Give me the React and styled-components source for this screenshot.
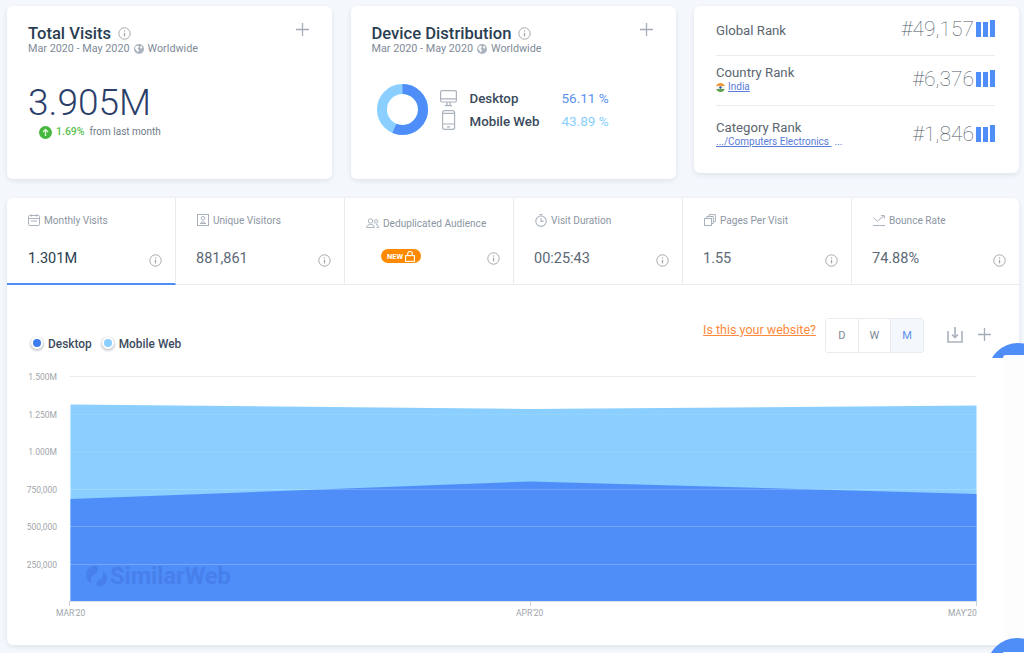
import React from 'react';
import styled, { createGlobalStyle } from 'styled-components';

const GlobalStyle = createGlobalStyle`
  html, body { margin: 0; padding: 0; height: 100%; background: #f4f8fd; overflow: hidden; }
  body { font-family: Roboto, "Liberation Sans", sans-serif; }
`;

const Page = styled.div`
  position: relative;
  width: 1024px;
  height: 653px;
  padding: 6px 5px 0 7px;
  box-sizing: border-box;
  overflow: hidden;
`;

const TopRow = styled.div`
  display: flex;
  align-items: flex-start;
  gap: 18.5px;
`;

const Card = styled.section`
  position: relative;
  box-sizing: border-box;
  width: 325px;
  height: ${p => p.$h || 173}px;
  background: #fff;
  border-radius: 6px;
  box-shadow: 0 2px 5px rgba(42, 62, 82, 0.1);
`;

const MetricCard = styled(Card)`
  padding: 18px 21px;
`;

const TitleRow = styled.div`
  display: flex;
  align-items: center;
  gap: 7px;
  height: 19px;
`;

const Title = styled.h2`
  margin: 0;
  font-size: 16.6px;
  line-height: 19px;
  font-weight: 500;
  color: #2a3e52;
`;

const SubTitle = styled.div`
  display: flex;
  align-items: center;
  gap: 4px;
  margin-top: -1px;
  font-size: 10.8px;
  line-height: 13px;
  color: #808b98;
`;

const AddButton = styled.button`
  position: absolute;
  top: 17px;
  right: 23px;
  padding: 0;
  border: 0;
  background: none;
  display: flex;
`;

const BigValue = styled.div`
  margin-top: 26px;
  font-size: 37px;
  line-height: 44px;
  font-weight: 300;
  color: #2a3e6a;
`;

const Change = styled.div`
  display: flex;
  align-items: center;
  margin: 0 0 0 11px;
  font-size: 10px;
  line-height: 14px;
  color: #6f7b88;
`;

const ChangeValue = styled.span`
  margin: 0 5px 0 4px;
  font-size: 10.5px;
  font-weight: 500;
  color: #5cc04e;
`;

const DeviceBody = styled.div`
  display: flex;
  align-items: center;
  margin: 29px 0 0 5px;
`;

const DeviceIcons = styled.div`
  display: flex;
  flex-direction: column;
  gap: 3px;
  margin-left: 12px;
`;

const DeviceNames = styled.div`
  display: flex;
  flex-direction: column;
  gap: 6px;
  margin-left: 13px;
  width: 92px;
`;

const DeviceName = styled.div`
  font-size: 13.3px;
  line-height: 17px;
  font-weight: 500;
  color: #3a4a5c;
`;

const DeviceShares = styled.div`
  display: flex;
  flex-direction: column;
  gap: 6px;
`;

const DeviceShare = styled.div`
  font-size: 13.5px;
  line-height: 17px;
  color: ${p => p.$c};
`;

const RankCard = styled(Card)`
  padding: 0 24px 0 22px;
`;

const RankRow = styled.div`
  display: flex;
  justify-content: space-between;
  box-sizing: border-box;
  height: ${p => p.$h}px;
  padding-top: ${p => p.$top}px;
  border-bottom: ${p => (p.$last ? 0 : '1px solid #e9ecef')};
`;

const RankLabel = styled.div`
  font-size: 13.2px;
  line-height: 16px;
  color: #5c6670;
`;

const RankLink = styled.a`
  display: flex;
  align-items: center;
  gap: 3px;
  font-size: 10px;
  line-height: 12px;
  color: #5a7bd8;
  span { text-decoration: underline; }
`;

const RankValue = styled.div`
  display: flex;
  align-items: flex-end;
  gap: 2px;
  height: 20px;
  margin-top: ${p => p.$mt || 0}px;
  font-size: 21px;
  line-height: 20px;
  font-weight: 100;
  color: #4d5866;
`;

const Bars = styled.div`
  display: flex;
  align-items: flex-end;
  gap: 2px;
  margin-bottom: 2px;
`;

const Bar = styled.i`
  display: block;
  width: 5px;
  height: ${p => p.$h}px;
  background: #4f8df9;
`;

const MainCard = styled.section`
  margin-top: 19px;
  width: 1012px;
  height: 447px;
  background: #fff;
  border-radius: 6px;
  box-shadow: 0 2px 5px rgba(42, 62, 82, 0.1);
`;

const Tabs = styled.div`
  display: grid;
  grid-template-columns: repeat(5, 169px) 1fr;
  height: 87px;
  border-bottom: 1px solid #e9ecef;
  box-sizing: border-box;
`;

const Tab = styled.div`
  position: relative;
  padding: ${p => (p.$low ? 18 : 15)}px 0 0 21px;
  height: 87px;
  box-sizing: border-box;
  border-right: ${p => (p.$last ? 0 : '1px solid #e9ecef')};
  border-bottom: ${p => (p.$active ? '2px solid #4f8df9' : 0)};
`;

const TabTitle = styled.div`
  display: flex;
  align-items: center;
  gap: 4px;
  height: 14px;
  font-size: 10.1px;
  color: #8c96a2;
`;

const TabValue = styled.div`
  margin: 22px 0 0 ${p => (p.$active ? 0 : -1)}px;
  font-size: 14.5px;
  line-height: 20px;
  color: ${p => (p.$active ? '#2a3e52' : '#5d6876')};
`;

const TabInfo = styled.span`
  position: absolute;
  right: 13px;
  top: ${p => (p.$low ? 54 : 56)}px;
  display: flex;
`;

const NewBadge = styled.div`
  display: inline-flex;
  align-items: center;
  justify-content: center;
  gap: 2px;
  margin: 19px 0 0 15px;
  width: 40px;
  height: 14px;
  border-radius: 7px;
  background: #ff8a00;
  color: #fff;
  font-size: 7.5px;
  font-weight: 700;
`;

const ChartHead = styled.div`
  display: flex;
  justify-content: space-between;
  align-items: flex-start;
  height: 83px;
  padding: 33px 28px 0 24px;
  box-sizing: border-box;
`;

const Legend = styled.div`
  display: flex;
  gap: 10px;
  padding-top: 18px;
`;

const LegendItem = styled.div`
  display: flex;
  align-items: center;
  gap: 5px;
  font-size: 11.9px;
  line-height: 16px;
  font-weight: 500;
  color: #3d4c5e;
`;

const Dot = styled.span`
  width: 8px;
  height: 8px;
  margin-top: -3px;
  border-radius: 50%;
  background: ${p => p.$c};
  border: 2px solid #fff;
  box-shadow: 0 1px 2px 1px rgba(42, 62, 82, 0.25);
`;

const Controls = styled.div`
  display: flex;
  align-items: flex-start;
`;

const SiteLink = styled.a`
  margin: 4px 9px 0 0;
  font-size: 12.5px;
  line-height: 16px;
  color: #ff8a3c;
  text-decoration: underline;
`;

const Range = styled.div`
  display: flex;
  height: 33px;
  border: 1px solid #e9ecef;
  border-radius: 3px;
  margin-right: 23px;
`;

const RangeItem = styled.div`
  display: flex;
  align-items: center;
  justify-content: center;
  width: 31.7px;
  font-size: 11px;
  color: ${p => (p.$active ? '#5b8ff0' : '#7b8794')};
  background: ${p => (p.$active ? '#f4f8fd' : '#fff')};
  & + & { border-left: 1px solid #e9ecef; }
`;

const ChartActions = styled.div`
  display: flex;
  align-items: center;
  gap: 15px;
  height: 33px;
`;

const ChartWrap = styled.div`
  svg { display: block; }
`;

// the two cut-off round buttons that stick out on the right edge
const FloatClip = styled.div`
  position: absolute;
  left: 985px;
  top: ${p => p.$y}px;
  width: 39px;
  height: 15px;
  overflow: hidden;
`;

const FloatRound = styled.div`
  width: 60px;
  height: 60px;
  margin-left: ${p => p.$x || 3}px;
  border-radius: 50%;
  background: #4f8df9;
`;

const FloatSheet = styled.div`
  position: absolute;
  left: 1003px;
  top: ${p => p.$y}px;
  width: 21px;
  height: ${p => p.$h}px;
  background: #fdfdfe;
  border-radius: 3px 0 0 0;
`;

const Plus = () => (
  <svg width="13" height="13" viewBox="0 0 13 13" fill="none" stroke="#a4adb7" strokeWidth="1.3">
    <path d="M6.5 0v13M0 6.5h13" />
  </svg>
);

const Info = () => (
  <svg width="13" height="13" viewBox="0 0 13 13" fill="none" stroke="#a9a9a9">
    <circle cx="6.5" cy="6.5" r="5.7" />
    <path d="M6.5 5.8v3.6" strokeWidth="1.3" />
    <path d="M6.5 3.4v1.2" strokeWidth="1.3" />
  </svg>
);

const Globe = () => (
  <svg width="10" height="10" viewBox="0 0 10 10">
    <circle cx="5" cy="5" r="5" fill="#a9b3bd" />
    <path d="M1.5 2.5 4 1.5l1 1.5-1.5 1.5L5 6 4 8.5 2.5 6.5 1 4.5zM7 1.5l1.5 2L7 5 6 3z" fill="#fff" />
  </svg>
);

const UpArrow = () => (
  <svg width="13" height="13" viewBox="0 0 13 13">
    <circle cx="6.5" cy="6.5" r="6.5" fill="#44b83c" />
    <path d="M6.5 10V3.6M4 6l2.5-2.5L9 6" fill="none" stroke="#dff5d8" strokeWidth="1.3" />
  </svg>
);

const Donut = () => (
  <svg width="51" height="51" viewBox="0 0 51 51">
    <circle cx="25.5" cy="25.5" r="20.5" fill="none" stroke="#8acfff" strokeWidth="10" />
    <circle
      cx="25.5"
      cy="25.5"
      r="20.5"
      fill="none"
      stroke="#4f8df9"
      strokeWidth="10"
      strokeDasharray={`${2 * Math.PI * 20.5 * 0.5611} 200`}
      transform="rotate(-90 25.5 25.5)"
    />
  </svg>
);

const DesktopIcon = () => (
  <svg width="17" height="17" viewBox="0 0 17 17" fill="none" stroke="#aab2bd" strokeWidth="1.2">
    <rect x=".6" y=".6" width="15.8" height="11.4" rx="1.5" />
    <path d="M.6 8.8h15.8M7 12v3M10 12v3M5 15.6h7" />
  </svg>
);

const MobileIcon = () => (
  <svg width="17" height="20" viewBox="0 0 17 20" fill="none" stroke="#aab2bd" strokeWidth="1.2">
    <rect x="2.6" y=".6" width="12" height="18.8" rx="2" />
    <path d="M2.6 3.4h12M2.6 14h12M7 16.8h3" />
  </svg>
);

const IndiaFlag = () => (
  <svg width="9" height="9" viewBox="0 0 9 9">
    <defs>
      <clipPath id="flagClip"><circle cx="4.5" cy="4.5" r="4.5" /></clipPath>
    </defs>
    <g clipPath="url(#flagClip)">
      <rect width="9" height="3" fill="#f39a3b" />
      <rect y="3" width="9" height="3" fill="#f4f4f4" />
      <rect y="6" width="9" height="3" fill="#5fa04e" />
      <circle cx="4.5" cy="4.5" r="1.2" fill="#34569a" />
    </g>
  </svg>
);

const RankBars = () => (
  <Bars>
    <Bar $h={15} />
    <Bar $h={15} />
    <Bar $h={17} />
  </Bars>
);

const CalendarIcon = () => (
  <svg width="12" height="12" viewBox="0 0 12 12" fill="none" stroke="#aab2bd">
    <rect x=".5" y="1.5" width="11" height="10" rx="1" />
    <path d="M.5 4.5h11M3 .2v2.5M9 .2v2.5M3 7h6" />
  </svg>
);

const VisitorIcon = () => (
  <svg width="12" height="12" viewBox="0 0 12 12" fill="none" stroke="#aab2bd">
    <rect x=".5" y=".5" width="11" height="11" />
    <circle cx="6" cy="4.3" r="1.8" />
    <path d="M3 9.5h6M3.5 9.5c0-2 5-2 5 0" />
  </svg>
);

const AudienceIcon = () => (
  <svg width="13" height="10" viewBox="0 0 13 10" fill="none" stroke="#aab2bd">
    <circle cx="4.5" cy="3" r="2.2" />
    <circle cx="10" cy="3.4" r="1.7" />
    <path d="M.5 9.5c0-4 8-4 8 0zM10 6.5c1.5 0 2.5 1 2.5 3h-2" />
  </svg>
);

const TimerIcon = () => (
  <svg width="12" height="13" viewBox="0 0 12 13" fill="none" stroke="#aab2bd" strokeWidth="1.1">
    <circle cx="6" cy="7.2" r="5.2" />
    <path d="M6 4v3.4h2.6M4.5.6h3" />
  </svg>
);

const PagesIcon = () => (
  <svg width="12" height="12" viewBox="0 0 12 12" fill="none" stroke="#aab2bd">
    <rect x=".5" y="4.5" width="7" height="7" />
    <path d="M2.8 4.5v-2h6.5v7H7.5M5 2.5V.6h6.4v7H9.3" />
  </svg>
);

const BounceIcon = () => (
  <svg width="12" height="11" viewBox="0 0 12 11" fill="none" stroke="#aab2bd">
    <path d="M.3 2.5 4.2 6.2 11 .8M8 .5h3.3v3M0 10.5h12" />
  </svg>
);

const LockIcon = () => (
  <svg width="10" height="11" viewBox="0 0 10 11" fill="none" stroke="#fff" strokeWidth="1.1">
    <rect x=".6" y="4.6" width="8.8" height="5.8" />
    <path d="M2.7 4.6V2.8a2.3 2.3 0 0 1 4.6 0v1.8" />
  </svg>
);

const DownloadIcon = () => (
  <svg width="16" height="16" viewBox="0 0 16 16" fill="none" stroke="#aab2bd" strokeWidth="1.6">
    <path d="M1 4v11h14V4M8 0v10M5 7.5 8 10.5l3-3" />
  </svg>
);

const yTicks = [
  ['1.500M', 376, '#e9ecef'],
  ['1.250M', 414, 'rgba(255,255,255,0.1)'],
  ['1.000M', 451, 'rgba(255,255,255,0.1)'],
  ['750,000', 489, 'rgba(255,255,255,0.2)'],
  ['500,000', 526, 'rgba(255,255,255,0.22)'],
  ['250,000', 564, 'rgba(255,255,255,0.22)'],
];

const Chart = () => (
  <svg width="1012" height="277" viewBox="7 368 1012 277" fontFamily="Roboto, sans-serif">
    <path d="M70.5 404.5 530 409 976.5 405.5V601H70.5z" fill="#8acfff" />
    <path d="M70.5 499 530 481.5 976.5 494V601H70.5z" fill="#4f8df9" />
    {yTicks.map(([label, y, color]) => (
      <g key={label}>
        <line x1="70" x2="976" y1={y + 0.5} y2={y + 0.5} stroke={color} />
        <text x="57" y={y + 3.5} fontSize="8.5" textAnchor="end" fill="#a0a5ab">{label}</text>
      </g>
    ))}
    <line x1="70" x2="976" y1="601.5" y2="601.5" stroke="#dfe4ea" />
    <path d="M69.5 601v5M530.5 601v5M976.5 601v5" stroke="#ccd1d6" />
    <text x="56" y="616" fontSize="8.5" fill="#a0a5ab">MAR'20</text>
    <text x="516" y="616" fontSize="8.5" fill="#a0a5ab">APR'20</text>
    <text x="948" y="616" fontSize="8.5" fill="#a0a5ab">MAY'20</text>
    <g fill="#3f72d8" opacity="0.45">
      <path d="M97 566c-6-1-11 3-11 9 0 4 3 7 6 8-2-4-1-7 3-9 3-2 4-5 2-8zM98 586c6 1 9-3 9-8 0-4-2-6-5-7 2 4 1 7-3 9-3 2-3 4-1 6z" />
      <text x="110" y="584" fontSize="23.5" fontWeight="700">SimilarWeb</text>
    </g>
  </svg>
);

const tabs = [
  { title: 'Monthly Visits', value: '1.301M', Icon: CalendarIcon, active: true },
  { title: 'Unique Visitors', value: '881,861', Icon: VisitorIcon },
  { title: 'Deduplicated Audience', Icon: AudienceIcon, low: true },
  { title: 'Visit Duration', value: '00:25:43', Icon: TimerIcon },
  { title: 'Pages Per Visit', value: '1.55', Icon: PagesIcon },
  { title: 'Bounce Rate', value: '74.88%', Icon: BounceIcon },
];

export default function App() {
  return (
    <Page>
      <GlobalStyle />
      <TopRow>
        <MetricCard>
          <TitleRow><Title>Total Visits</Title><Info /></TitleRow>
          <SubTitle>Mar 2020 - May 2020 <Globe /> Worldwide</SubTitle>
          <AddButton><Plus /></AddButton>
          <BigValue>3.905M</BigValue>
          <Change><UpArrow /><ChangeValue>1.69%</ChangeValue> from last month</Change>
        </MetricCard>
        <MetricCard>
          <TitleRow><Title>Device Distribution</Title><Info /></TitleRow>
          <SubTitle>Mar 2020 - May 2020 <Globe /> Worldwide</SubTitle>
          <AddButton><Plus /></AddButton>
          <DeviceBody>
            <Donut />
            <DeviceIcons><DesktopIcon /><MobileIcon /></DeviceIcons>
            <DeviceNames>
              <DeviceName>Desktop</DeviceName>
              <DeviceName>Mobile Web</DeviceName>
            </DeviceNames>
            <DeviceShares>
              <DeviceShare $c="#5b8ff0">56.11 %</DeviceShare>
              <DeviceShare $c="#8acfff">43.89 %</DeviceShare>
            </DeviceShares>
          </DeviceBody>
        </MetricCard>
        <RankCard $h={167}>
          <RankRow $h={50} $top={17}>
            <RankLabel>Global Rank</RankLabel>
            <RankValue $mt={-4}><span>#49,157</span><RankBars /></RankValue>
          </RankRow>
          <RankRow $h={50} $top={9}>
            <div>
              <RankLabel>Country Rank</RankLabel>
              <RankLink><IndiaFlag /><span>India</span></RankLink>
            </div>
            <RankValue $mt={4}><span>#6,376</span><RankBars /></RankValue>
          </RankRow>
          <RankRow $h={60} $top={14} $last>
            <div>
              <RankLabel>Category Rank</RankLabel>
              <RankLink><span>.../Computers Electronics&nbsp;</span> ...</RankLink>
            </div>
            <RankValue $mt={4}><span>#1,846</span><RankBars /></RankValue>
          </RankRow>
        </RankCard>
      </TopRow>
      <MainCard>
        <Tabs>
          {tabs.map(({ title, value, Icon, active, low }, i) => (
            <Tab key={title} $active={active} $low={low} $last={i === tabs.length - 1}>
              <TabTitle><Icon />{title}</TabTitle>
              {value ? (
                <TabValue $active={active}>{value}</TabValue>
              ) : (
                <NewBadge>NEW <LockIcon /></NewBadge>
              )}
              <TabInfo $low={low}><Info /></TabInfo>
            </Tab>
          ))}
        </Tabs>
        <ChartHead>
          <Legend>
            <LegendItem><Dot $c="#3e7bf0" />Desktop</LegendItem>
            <LegendItem><Dot $c="#8acfff" />Mobile Web</LegendItem>
          </Legend>
          <Controls>
            <SiteLink>Is this your website?</SiteLink>
            <Range>
              <RangeItem>D</RangeItem>
              <RangeItem>W</RangeItem>
              <RangeItem $active>M</RangeItem>
            </Range>
            <ChartActions><DownloadIcon /><Plus /></ChartActions>
          </Controls>
        </ChartHead>
        <ChartWrap><Chart /></ChartWrap>
      </MainCard>
      <FloatClip $y={343}><FloatRound /></FloatClip>
      <FloatSheet $y={355} $h={288} />
      <FloatClip $y={638}><FloatRound $x={2} /></FloatClip>
      <FloatSheet $y={652} $h={1} />
    </Page>
  );
}
